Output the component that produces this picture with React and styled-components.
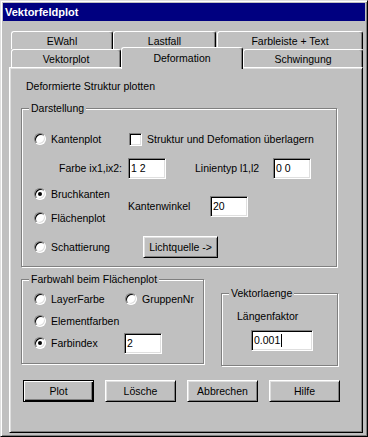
import React from "react"
import styled, { createGlobalStyle } from "styled-components"

const GlobalStyle = createGlobalStyle`
  html, body {
    margin: 0;
    padding: 0;
    background: #c0c0c0;
  }
  body {
    font-family: "Liberation Sans", Arial, sans-serif;
    font-size: 10.5px;
    color: #000;
  }
`

const Window = styled.div`
  box-sizing: border-box;
  width: 368px;
  height: 437px;
  background: #c0c0c0;
  border: 1px solid;
  border-color: #dfdfdf #000 #000 #dfdfdf;
  box-shadow: inset 1px 1px #fff, inset -1px -1px #808080;
  padding: 2px;
  display: flex;
  flex-direction: column;
`

const TitleBar = styled.div`
  height: 18px;
  line-height: 18px;
  padding-left: 2px;
  background: #000080;
  color: #fff;
  font-weight: bold;
  font-size: 11px;
`

const TabArea = styled.div`
  flex: 1;
  display: flex;
  flex-direction: column;
  padding: 10px 2px 1px 6px;
`

const TabRow = styled.div`
  position: relative;
  z-index: ${({ $front }) => ($front ? 3 : 1)};
  display: flex;
  align-items: flex-end;
  height: 18px;
  padding-left: 2px;
`

const Tab = styled.div`
  box-sizing: border-box;
  width: ${({ $w }) => $w}px;
  height: ${({ $active }) => ($active ? 22 : 18)}px;
  margin-bottom: ${({ $active }) => ($active ? -2 : 0)}px;
  margin-right: ${({ $gap }) => $gap || 0}px;
  padding-bottom: ${({ $active }) => ($active ? 2 : 0)}px;
  background: #c0c0c0;
  border-top: 1px solid #fff;
  border-left: 1px solid #fff;
  border-right: 1px solid #000;
  box-shadow: inset -1px 0 #808080;
  border-radius: 3px 3px 0 0;
  display: flex;
  align-items: center;
  justify-content: center;
`

const Panel = styled.div`
  position: relative;
  z-index: 2;
  flex: 1;
  box-sizing: border-box;
  border: 1px solid;
  border-color: #fff #000 #000 #fff;
  box-shadow: inset 1px 1px #dfdfdf, inset -1px -1px #808080;
  padding: 12px 11px 0 11px;
`

const Description = styled.div`
  height: 13px;
  line-height: 13px;
  margin: 0 0 15px 5px;
`

const GroupBox = styled.div`
  position: relative;
  box-sizing: border-box;
  width: ${({ $w }) => $w}px;
  height: ${({ $h }) => $h}px;
  margin-top: ${({ $top }) => $top || 0}px;
  border: 1px solid #808080;
  box-shadow: inset 1px 1px #fff, 1px 1px #fff;
`

const Caption = styled.span`
  position: absolute;
  top: -7px;
  left: 7px;
  padding: 0 2px;
  line-height: 13px;
  background: #c0c0c0;
`

const GroupBody = styled.div`
  padding: ${({ $pad }) => $pad};
`

const Row = styled.div`
  display: flex;
  align-items: center;
  height: ${({ $h }) => $h}px;
  margin-top: ${({ $top }) => $top || 0}px;
`

const RadioItem = styled.div`
  display: flex;
  align-items: center;
  gap: 5px;
  width: ${({ $w }) => ($w ? `${$w}px` : "auto")};
`

const Radio = styled.span`
  position: relative;
  box-sizing: border-box;
  flex: none;
  width: 12px;
  height: 12px;
  border-radius: 50%;
  background: #fff;
  border: 1px solid;
  border-color: #808080 #fff #fff #808080;
  box-shadow: inset 1px 1px #000, inset -1px -1px #dfdfdf;
  &::after {
    content: "";
    display: ${({ $checked }) => ($checked ? "block" : "none")};
    position: absolute;
    left: 3px;
    top: 3px;
    width: 4px;
    height: 4px;
    border-radius: 50%;
    background: #000;
  }
`

const CheckBox = styled.span`
  box-sizing: border-box;
  flex: none;
  width: 13px;
  height: 13px;
  background: #fff;
  border: 1px solid;
  border-color: #808080 #fff #fff #808080;
  box-shadow: inset 1px 1px #000, inset -1px -1px #dfdfdf;
`

const Text = styled.span`
  line-height: 13px;
  white-space: nowrap;
`

const FieldLabel = styled.span`
  box-sizing: border-box;
  width: ${({ $w }) => $w}px;
  margin-left: ${({ $left }) => $left || 0}px;
  text-align: ${({ $align }) => $align || "left"};
  line-height: 13px;
  white-space: nowrap;
`

const TextBox = styled.div`
  box-sizing: border-box;
  width: ${({ $w }) => $w}px;
  height: 21px;
  margin: ${({ $m }) => $m || 0};
  padding: 3px 2px 0;
  line-height: 13px;
  background: #fff;
  border: 1px solid;
  border-color: #808080 #fff #fff #808080;
  box-shadow: inset 1px 1px #000, inset -1px -1px #dfdfdf;
  white-space: nowrap;
`

const Caret = styled.span`
  display: inline-block;
  width: 1px;
  height: 13px;
  margin-left: 1px;
  background: #000;
  vertical-align: top;
`

const OptionGrid = styled.div`
  display: grid;
  grid-template-columns: 94px auto;
  grid-template-rows: 24px 24px 34px;
  align-items: center;
  margin-top: 3px;
`

const AngleCell = styled.div`
  grid-column: 2;
  grid-row: 1 / span 2;
  display: flex;
  align-items: center;
`

const Button = styled.div`
  box-sizing: border-box;
  width: ${({ $w }) => $w}px;
  height: 22px;
  margin-left: ${({ $left }) => $left || 0}px;
  display: flex;
  align-items: center;
  justify-content: center;
  background: #c0c0c0;
  border: 1px solid;
  border-color: ${({ $default }) =>
    $default ? "#000" : "#fff #000 #000 #fff"};
  box-shadow: ${({ $default }) =>
    $default
      ? "inset 1px 1px #fff, inset -1px -1px #000, inset -2px -2px #808080"
      : "inset 1px 1px #dfdfdf, inset -1px -1px #808080"};
`

const LowerRow = styled.div`
  display: flex;
  align-items: flex-start;
  gap: 17px;
  margin-top: 12px;
`

const ButtonRow = styled.div`
  display: flex;
  gap: 11px;
  margin: 14px 0 0 2px;
`

const App = () => {
  return (
    <>
      <GlobalStyle />
      <Window>
        <TitleBar>Vektorfeldplot</TitleBar>
        <TabArea>
          <TabRow>
            <Tab $w={102}>EWahl</Tab>
            <Tab $w={103} $gap={1}>Lastfall</Tab>
            <Tab $w={146}>Farbleiste + Text</Tab>
          </TabRow>
          <TabRow $front>
            <Tab $w={110}>Vektorplot</Tab>
            <Tab $w={122} $active>Deformation</Tab>
            <Tab $w={120}>Schwingung</Tab>
          </TabRow>
          <Panel>
            <Description>Deformierte Struktur plotten</Description>

            <GroupBox $w={316} $h={159}>
              <Caption>Darstellung</Caption>
              <GroupBody $pad="20px 0 0 12px">
                <Row $h={20}>
                  <RadioItem $w={95}>
                    <Radio />
                    <Text>Kantenplot</Text>
                  </RadioItem>
                  <RadioItem>
                    <CheckBox />
                    <Text>Struktur und Defomation überlagern</Text>
                  </RadioItem>
                </Row>
                <Row $h={21} $top={9}>
                  <FieldLabel $w={88} $align="right">Farbe ix1,ix2:</FieldLabel>
                  <TextBox $w={38} $m="0 0 0 6px">1 2</TextBox>
                  <FieldLabel $w={78} $left={29}>Linientyp l1,l2</FieldLabel>
                  <TextBox $w={38}>0 0</TextBox>
                </Row>
                <OptionGrid>
                  <RadioItem>
                    <Radio $checked />
                    <Text>Bruchkanten</Text>
                  </RadioItem>
                  <AngleCell>
                    <FieldLabel $w={82}>Kantenwinkel</FieldLabel>
                    <TextBox $w={38}>20</TextBox>
                  </AngleCell>
                  <RadioItem>
                    <Radio />
                    <Text>Flächenplot</Text>
                  </RadioItem>
                  <RadioItem>
                    <Radio />
                    <Text>Schattierung</Text>
                  </RadioItem>
                  <Button $w={75} $left={15}>Lichtquelle -&gt;</Button>
                </OptionGrid>
              </GroupBody>
            </GroupBox>

            <LowerRow>
              <GroupBox $w={183} $h={85}>
                <Caption>Farbwahl beim Flächenplot</Caption>
                <GroupBody $pad="8px 0 0 12px">
                  <Row $h={22}>
                    <RadioItem $w={91}>
                      <Radio />
                      <Text>LayerFarbe</Text>
                    </RadioItem>
                    <RadioItem>
                      <Radio />
                      <Text>GruppenNr</Text>
                    </RadioItem>
                  </Row>
                  <Row $h={22}>
                    <RadioItem>
                      <Radio />
                      <Text>Elementfarben</Text>
                    </RadioItem>
                  </Row>
                  <Row $h={22}>
                    <RadioItem $w={90}>
                      <Radio $checked />
                      <Text>Farbindex</Text>
                    </RadioItem>
                    <TextBox $w={38}>2</TextBox>
                  </Row>
                </GroupBody>
              </GroupBox>

              <GroupBox $w={117} $h={73} $top={14}>
                <Caption>Vektorlaenge</Caption>
                <GroupBody $pad="16px 0 0 15px">
                  <Text>Längenfaktor</Text>
                  <TextBox $w={62} $m="7px 0 0 14px">
                    0.001<Caret />
                  </TextBox>
                </GroupBody>
              </GroupBox>
            </LowerRow>

            <ButtonRow>
              <Button $w={71} $default>Plot</Button>
              <Button $w={71}>Lösche</Button>
              <Button $w={71}>Abbrechen</Button>
              <Button $w={71}>Hilfe</Button>
            </ButtonRow>
          </Panel>
        </TabArea>
      </Window>
    </>
  )
}

export default App
